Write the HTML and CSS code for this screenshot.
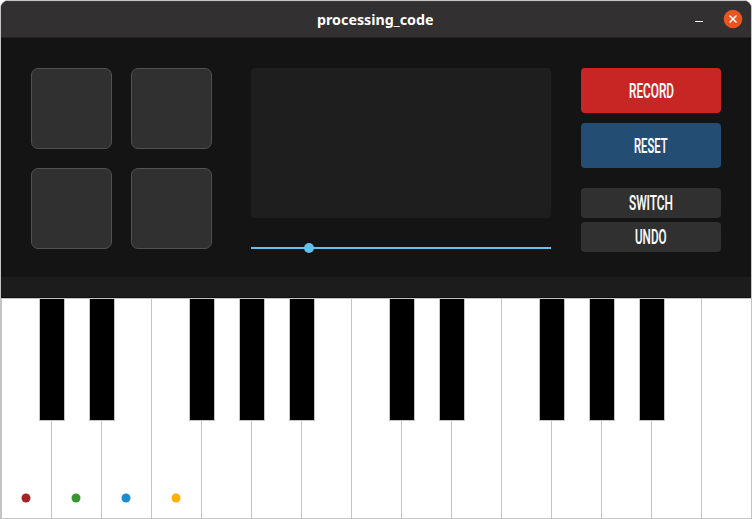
FILE: index.html
```html
<!DOCTYPE html>
<html lang="en">
<head>
<meta charset="utf-8">
<title>processing_code</title>
<link rel="stylesheet" href="styles.css">
</head>
<body>
<div class="window">
  <header class="titlebar">
    <svg class="title" width="120" height="30"><text x="1" y="20" textLength="116.5" lengthAdjust="spacingAndGlyphs">processing_code</text></svg>
    <div class="controls">
      <span class="minimize"></span>
      <svg class="close" width="20" height="20"><circle cx="10" cy="10" r="9.3"/><path d="M6.5 6.5l7 7M13.5 6.5l-7 7"/></svg>
    </div>
  </header>
  <main class="panel">
    <div class="pads"><span></span><span></span><span></span><span></span></div>
    <div class="center">
      <div class="screen"></div>
      <div class="slider"><span class="knob"></span></div>
    </div>
    <div class="buttons">
      <div class="button record"><svg width="140" height="45"><text x="48" y="30" textLength="45" lengthAdjust="spacingAndGlyphs">RECORD</text></svg></div>
      <div class="button reset"><svg width="140" height="45"><text x="53" y="30" textLength="33.5" lengthAdjust="spacingAndGlyphs">RESET</text></svg></div>
      <div class="button small"><svg width="140" height="30"><text x="48" y="22" textLength="44" lengthAdjust="spacingAndGlyphs">SWITCH</text></svg></div>
      <div class="button small"><svg width="140" height="30"><text x="54" y="22" textLength="31.5" lengthAdjust="spacingAndGlyphs">UNDO</text></svg></div>
    </div>
  </main>
  <div class="strip"></div>
  <div class="piano">
    <div class="key sharp"><i class="dot red"></i></div>
    <div class="key sharp"><i class="dot green"></i></div>
    <div class="key"><i class="dot blue"></i></div>
    <div class="key sharp"><i class="dot yellow"></i></div>
    <div class="key sharp"></div>
    <div class="key sharp"></div>
    <div class="key"></div>
    <div class="key sharp"></div>
    <div class="key sharp"></div>
    <div class="key"></div>
    <div class="key sharp"></div>
    <div class="key sharp"></div>
    <div class="key sharp"></div>
    <div class="key"></div>
    <div class="key"></div>
  </div>
</div>
</body>
</html>
```
FILE: styles.css
```css
*, *::after { box-sizing: border-box; }
html { background: #fff; }
body { margin: 0; overflow: hidden; }
svg { display: block; }
.window {
  width: 752px;
  height: 519px;
  border: 1px solid #c4c4c4;
  border-radius: 8px 8px 0 0;
  background: #141414;
  overflow: hidden;
}
.titlebar {
  height: 37px;
  display: grid;
  grid-template-columns: 1fr 120px 1fr;
  align-items: center;
  background: #323030;
  border-top: 1px solid #3c3a3a;
  border-bottom: 1px solid #232222;
}
.title { grid-column: 2; }
.title text {
  font: bold 14.5px "Noto Sans", "Open Sans", sans-serif;
  fill: #fff;
}
.controls {
  display: flex;
  justify-content: flex-end;
  align-items: center;
  gap: 20px;
  padding-right: 8px;
}
.minimize { width: 8px; height: 1px; margin-top: 4px; background: #fff; }
.close { position: relative; top: -1px; }
.close circle { fill: #e95420; }
.close path { stroke: #fff; stroke-width: 1.5; }
.panel {
  height: 239px;
  padding: 30px 30px 0;
  display: flex;
  justify-content: space-between;
}
.pads {
  display: grid;
  grid-template-columns: 81px 81px;
  grid-template-rows: 81px 81px;
  gap: 19px;
}
.pads span { background: #303030; border: 1px solid #505050; border-radius: 7px; }
.center { width: 300px; margin-left: 9px; }
.screen { height: 150px; background: #1e1e1e; border-radius: 4px; }
.slider {
  position: relative;
  height: 2px;
  margin-top: 29px;
  background: #62c2f0;
}
.knob {
  position: absolute;
  left: 53px;
  top: -4px;
  width: 10px;
  height: 10px;
  border-radius: 50%;
  background: #62c2f0;
}
.buttons { width: 140px; }
.button { border-radius: 4px; }
.button text {
  font: 500 20.5px Roboto, sans-serif;
  fill: #fff;
  stroke: #fff;
  stroke-width: 0.15;
}
.record { height: 45px; background: #c82624; margin-bottom: 10px; }
.reset { height: 45px; background: #244d74; margin-bottom: 20px; }
.small { height: 30px; background: #303030; margin-bottom: 4px; }
.strip { height: 21px; background: #1c1c1c; border-bottom: 1px solid #121012; }
.piano {
  height: 220px;
  display: flex;
  background: #fff;
  border-top: 1px solid #c4c4c4;
  border-left: 1px solid #c4c4c4;
}
.key {
  position: relative;
  flex: 0 0 50px;
  border-right: 1px solid #c4c4c4;
  display: flex;
  align-items: flex-end;
  justify-content: center;
  padding-bottom: 16px;
}
.key:last-child { border-right: 0; flex-basis: 49px; }
.sharp::after {
  content: "";
  position: absolute;
  z-index: 1;
  top: -1px;
  left: 37px;
  width: 26px;
  height: 123px;
  background: #000;
  border: 1px solid #c4c4c4;
}
.dot { width: 9px; height: 9px; border-radius: 50%; transform: translate(-0.5px, 0.5px); }
.red { background: #a52325; }
.green { background: #389530; }
.blue { background: #1b8dcd; }
.yellow { background: #ffb000; }
```
